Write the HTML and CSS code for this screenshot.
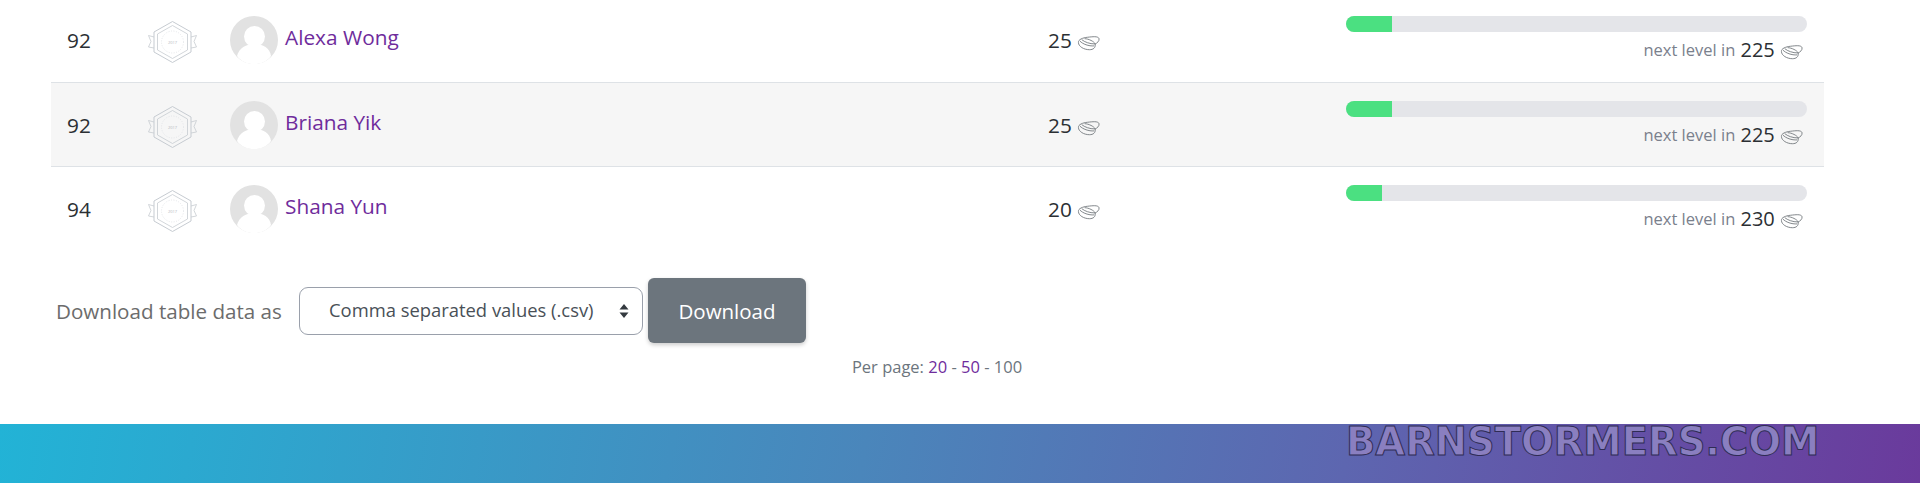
FILE: index.html
```html
<!DOCTYPE html>
<html lang="en">
<head>
<meta charset="utf-8">
<title>Leaderboard</title>
<link rel="stylesheet" href="styles.css">
</head>
<body>
<svg class="defs" width="0" height="0" aria-hidden="true">
  <defs>
    <symbol id="badge" viewBox="0 0 49 42">
      <g fill="none" stroke="#c6cbd1" stroke-width="0.8">
        <path d="M6 16 L0.500 14.500 L3 20.500 L0.500 26 L6 27"/>
        <path d="M43 16 L48.500 14.500 L46 20.500 L48.500 26 L43 27"/>
        <path d="M24.500 0.500 L43 11 L43 31 L24.500 41.500 L6 31 L6 11 Z" stroke-width="1"/>
        <path d="M24.500 4.500 L39.500 13 L39.500 29 L24.500 37.500 L9.500 29 L9.500 13 Z"/>
        <circle cx="24.500" cy="21" r="11" stroke="#dde0e3" stroke-dasharray="1 1.500"/>
      </g>
      <text class="badge-year" x="24.500" y="22.500">2017</text>
    </symbol>
    <symbol id="seed" viewBox="0 0 24 16">
      <g fill="none" stroke="#6f7479" stroke-width="0.9">
        <path d="M1.500 7.500 C1 4.500 6 2.500 11 2 C16 1.500 22 0.500 23 3.500 C23.500 6 21 8 19 9"/>
        <path d="M1.500 7.500 C1.500 11.500 7 15 13 15 C17 15 19.500 13 19 9 C18 6.500 12 3.500 8 3.500"/>
        <path d="M3 6 C6 9 12 11.500 18 11"/>
        <path d="M5 4.500 C8 7 13 9 19 9"/>
      </g>
    </symbol>
    <symbol id="avatar" viewBox="0 0 48 48">
      <circle cx="24" cy="24" r="24" fill="#e2e2e2"/>
      <circle cx="24.500" cy="20.500" r="10.500" fill="currentColor"/>
      <path d="M7 40 C9 32 16 28 24.500 28 C33 28 40 32 41 40 C37 45.500 31 48 24 48 C17 48 11 45.500 7 40 Z" fill="currentColor"/>
    </symbol>
  </defs>
</svg>

<main class="content">
  <table class="ranks">
    <tbody>
      <tr class="row">
        <td class="rank">92</td>
        <td class="level"><svg class="badge"><use href="#badge"/></svg></td>
        <td class="person"><div class="person-in"><svg class="avatar"><use href="#avatar"/></svg><a class="name" href="#">Alexa Wong</a></div></td>
        <td class="points">25 <svg class="seed"><use href="#seed"/></svg></td>
        <td class="progress-cell">
          <div class="bar"><div class="fill" style="width:10%"></div></div>
          <div class="next"><span class="next-label">next level in</span> 225 <svg class="seed"><use href="#seed"/></svg></div>
        </td>
      </tr>
      <tr class="row alt">
        <td class="rank">92</td>
        <td class="level"><svg class="badge"><use href="#badge"/></svg></td>
        <td class="person"><div class="person-in"><svg class="avatar"><use href="#avatar"/></svg><a class="name" href="#">Briana Yik</a></div></td>
        <td class="points">25 <svg class="seed"><use href="#seed"/></svg></td>
        <td class="progress-cell">
          <div class="bar"><div class="fill" style="width:10%"></div></div>
          <div class="next"><span class="next-label">next level in</span> 225 <svg class="seed"><use href="#seed"/></svg></div>
        </td>
      </tr>
      <tr class="row">
        <td class="rank">94</td>
        <td class="level"><svg class="badge"><use href="#badge"/></svg></td>
        <td class="person"><div class="person-in"><svg class="avatar"><use href="#avatar"/></svg><a class="name" href="#">Shana Yun</a></div></td>
        <td class="points">20 <svg class="seed"><use href="#seed"/></svg></td>
        <td class="progress-cell">
          <div class="bar"><div class="fill" style="width:7.800%"></div></div>
          <div class="next"><span class="next-label">next level in</span> 230 <svg class="seed"><use href="#seed"/></svg></div>
        </td>
      </tr>
    </tbody>
  </table>

  <form class="download">
    <label class="download-label" for="fmt">Download table data as</label>
    <div class="select" id="fmt">Comma separated values (.csv)
      <svg class="updown" viewBox="0 0 10 16"><path d="M5 1 L9.500 6.500 H0.500 Z M5 15 L0.500 9.500 H9.500 Z" fill="#343a40"/></svg>
    </div>
    <button class="btn" type="button">Download</button>
  </form>

  <p class="perpage">Per page: <a href="#">20</a> - <a href="#">50</a> - 100</p>
</main>

<footer class="footer">
  <span class="brand">BARNSTORMERS.COM</span>
</footer>
</body>
</html>
```

FILE: styles.css
```css
* { box-sizing: border-box; }
html, body { margin: 0; padding: 0; }
body {
  width: 1920px;
  height: 483px;
  overflow: hidden;
  background: #fff;
  font-family: "Open Sans", sans-serif;
  color: #2b2f33;
}
.defs { display: block; height: 0; }
.content { display: flow-root; height: 424px; padding: 0 95px 0 51px; }
.ranks {
  width: 1773px;
  border-collapse: collapse;
  table-layout: fixed;
  margin-top: -2px;
}
.row { height: 84px; border-bottom: 1px solid #dee2e6; }
.row:last-child { border-bottom: 0; }
.alt { background: #f6f6f6; }
.row td { padding: 0; vertical-align: top; }
.rank { width: 92px; font-size: 20.800px; line-height: 28px; }
.row .rank { padding: 28px 0 0 16px; }
.level { width: 87px; }
.badge { display: block; width: 49px; height: 42px; margin: 23px 0 0 5px; }
.badge-year { font: 4px "Open Sans", sans-serif; fill: #b4b8bd; text-anchor: middle; }
.person { width: 818px; }
.person-in { display: flex; align-items: flex-start; padding-top: 18px; }
.avatar { width: 48px; height: 48px; color: #fff; flex: none; margin-right: 7px; }
.name { color: #6f2c9c; font-size: 20.800px; line-height: 28px; margin-top: 7px; text-decoration: none; }
.row .points { width: 298px; font-size: 20.800px; line-height: 28px; padding-top: 28px; }
.seed { width: 23px; height: 16px; vertical-align: -3px; }
.row .progress-cell { padding-top: 18px; }
.bar { height: 16px; background: #e4e5e9; border-radius: 8px; overflow: hidden; width: 461px; }
.fill { height: 100%; background: #4be081; }
.next { text-align: right; width: 461px; padding-right: 4px; font-size: 20px; line-height: 26px; margin-top: 5px; }
.next-label { color: #7a808c; font-size: 16.500px; position: relative; top: -1px; }
.download {
  display: flex;
  align-items: center;
  margin: 28px 0 0 5px;
  height: 65px;
}
.download-label { width: 243px; color: #6c6c6c; font-size: 20.600px; }
.select {
  position: relative;
  width: 344px;
  height: 48px;
  border: 1.500px solid #9aa0ab;
  border-radius: 9px;
  padding-left: 29px;
  font-size: 18.400px;
  line-height: 44px;
  color: #495057;
}
.updown { position: absolute; right: 13px; top: 15px; width: 10px; height: 16px; }
.btn {
  width: 158px;
  height: 65px;
  margin-left: 5px;
  background: #6c757d;
  color: #fff;
  border: 0;
  border-radius: 6px;
  font: 20.500px "Open Sans", sans-serif;
  box-shadow: 0 2px 4px rgba(0, 0, 0, .2);
}
.perpage { margin: 12px 0 0; text-align: center; width: 1772px; font-size: 16.500px; color: #6c757d; }
.perpage a { color: #6f2c9c; text-decoration: none; }
.footer {
  height: 59px;
  background: linear-gradient(100deg, #22b3d6 0%, #4a86bb 45%, #5d66b0 70%, #6a3a9c 100%);
  padding-left: 1346px;
}
.brand {
  display: block;
  font-family: "DejaVu Sans", sans-serif;
  font-weight: 700;
  font-size: 38.500px;
  line-height: 36px;
  color: #8a7fc0;
  -webkit-text-stroke: 1px #2f2c55;
}
```
